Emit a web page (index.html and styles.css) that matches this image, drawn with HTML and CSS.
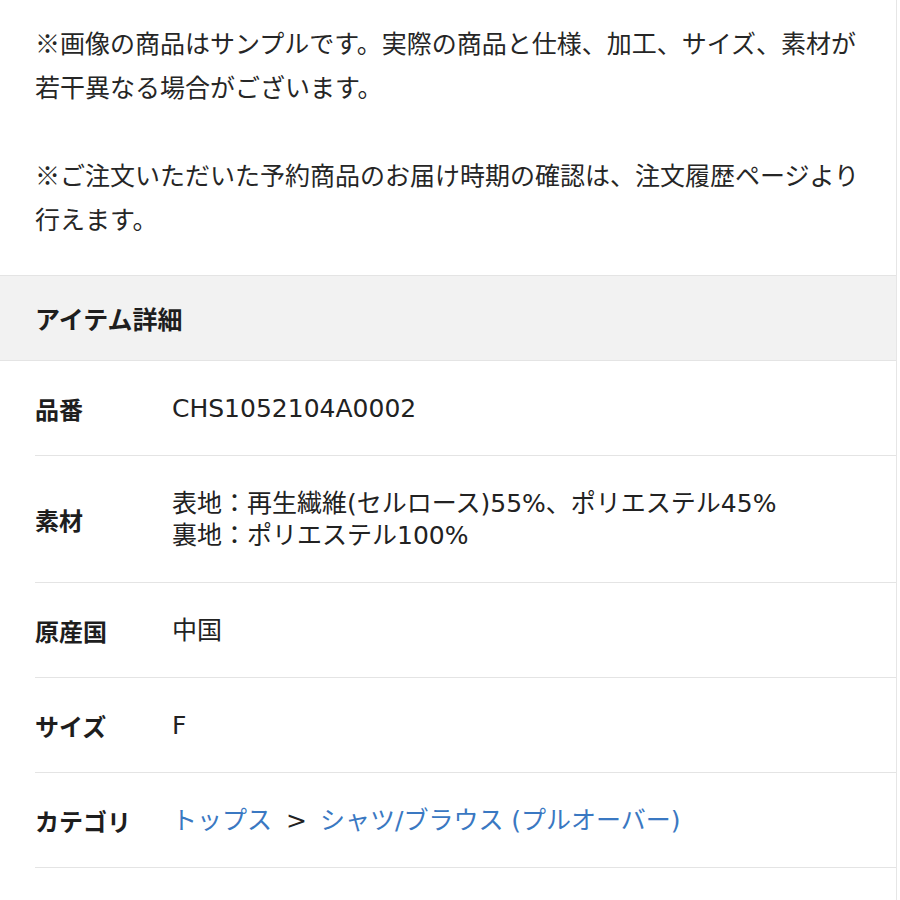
FILE: index.html
```html
<!DOCTYPE html>
<html lang="ja">
<head>
<meta charset="utf-8">
<link rel="stylesheet" href="styles.css">
</head>
<body>
<div class="page">
  <div class="notes">
    <p>※画像の商品はサンプルです。実際の商品と仕様、加工、サイズ、素材が<br>若干異なる場合がございます。</p>
    <p>※ご注文いただいた予約商品のお届け時期の確認は、注文履歴ページより<br>行えます。</p>
  </div>
  <div class="section-head">アイテム詳細</div>
  <div class="details">
    <div class="row">
      <div class="label">品番</div>
      <div class="value">CHS1052104A0002</div>
    </div>
    <div class="row">
      <div class="label">素材</div>
      <div class="value">表地：再生繊維(セルロース)55%、ポリエステル45%<br>裏地：ポリエステル100%</div>
    </div>
    <div class="row">
      <div class="label">原産国</div>
      <div class="value">中国</div>
    </div>
    <div class="row">
      <div class="label">サイズ</div>
      <div class="value">F</div>
    </div>
    <div class="row">
      <div class="label">カテゴリ</div>
      <div class="value"><a class="link" href="#">トップス</a><span class="sep">&gt;</span><a class="link" href="#">シャツ/ブラウス (プルオーバー)</a></div>
    </div>
    <div class="row">
      <div class="label">ブランド</div>
      <div class="value">&nbsp;</div>
    </div>
  </div>
</div>
</body>
</html>
```

FILE: styles.css
```css
html, body {
  margin: 0;
  padding: 0;
  background: #ffffff;
}
body {
  font-family: "Noto Sans CJK JP", "Noto Sans", sans-serif;
  color: #222222;
  overflow: hidden;
}
.page {
  width: 896px;
  border-right: 1px solid #e6e6e6;
  min-height: 900px;
}
.notes {
  padding: 20px 35px 35px 35px;
}
.notes p {
  margin: 0;
  font-size: 25px;
  line-height: 44px;
  white-space: nowrap;
  color: #262626;
}
.notes p + p {
  margin-top: 44px;
}
.section-head {
  background: #f2f2f2;
  border-top: 1px solid #e4e4e4;
  border-bottom: 1px solid #e4e4e4;
  height: 84px;
  display: flex;
  align-items: center;
  padding-left: 35px;
  font-size: 25px;
  font-weight: 700;
  color: #1e1e1e;
}
.details {
  padding-left: 35px;
}
.row {
  display: grid;
  grid-template-columns: 137px 1fr;
  align-items: center;
  padding: 32px 0 30px 0;
  border-bottom: 1px solid #e4e4e4;
}
.label {
  font-size: 24px;
  font-weight: 700;
  line-height: 32px;
  color: #1e1e1e;
}
.value {
  font-family: "DejaVu Sans", "Noto Sans CJK JP", sans-serif;
  font-size: 25px;
  line-height: 32px;
  color: #222222;
  white-space: nowrap;
}
.link {
  color: #3a78c2;
  text-decoration: none;
}
.sep {
  margin: 0 13px 0 14px;
  color: #222222;
}
```
